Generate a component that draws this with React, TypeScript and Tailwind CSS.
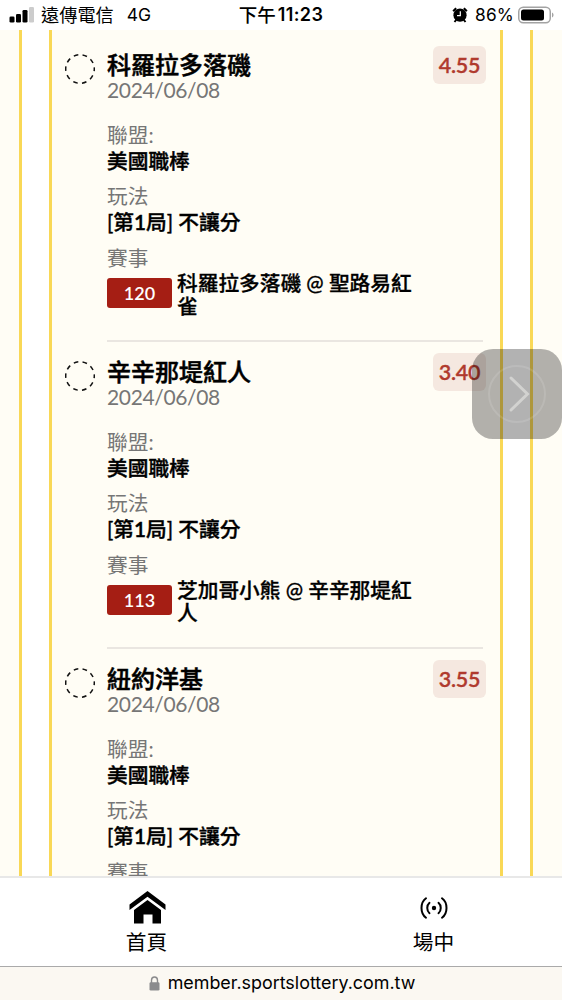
import React from 'react'

interface Bet {
  team: string;
  odds: string;
  code: string;
  match: string;
}

const bets: Bet[] = [
  { team: '科羅拉多落磯', odds: '4.55', code: '120', match: '科羅拉多落磯 @ 聖路易紅雀' },
  { team: '辛辛那堤紅人', odds: '3.40', code: '113', match: '芝加哥小熊 @ 辛辛那堤紅人' },
  { team: '紐約洋基', odds: '3.55', code: '', match: '' },
]

function StatusBar() {
  return (
    <header className="h-[30px] shrink-0 bg-white grid grid-cols-3 items-center text-[17px] leading-[30px] text-black font-['Inter','Noto_Sans_CJK_TC',sans-serif]">
      <div className="flex items-center pl-[9px]">
        <svg width="26" height="16" viewBox="0 0 26 16">
          <rect x="0.5" y="9.5" width="5" height="6" rx="1.3" />
          <rect x="7" y="7" width="5" height="8.5" rx="1.3" />
          <rect x="13.5" y="3" width="5" height="12.5" rx="1.3" />
          <rect x="20" y="0" width="5" height="15.5" rx="1.3" fill="#ccc" />
        </svg>
        <span className="ml-[6px] text-[18.2px] whitespace-nowrap">遠傳電信</span>
        <span className="ml-[13px] text-[17.5px]">4G</span>
      </div>
      <div className="flex justify-center font-semibold whitespace-nowrap">
        <span className="font-medium text-[18.5px]">下午</span>
        <span className="ml-[2px] text-[18px] tracking-[0.4px]">11:23</span>
      </div>
      <div className="flex items-center justify-end pr-[8px]">
        <svg width="16" height="16" viewBox="0 0 16 16">
          <circle cx="8" cy="8.2" r="6.6" />
          <path d="M1.2 4.2 4.2 1.2M14.8 4.2 11.8 1.2" stroke="#000" strokeWidth="2.2" />
          <path d="M2.500 15l2-2.500M13.500 15l-2-2.500" stroke="#000" strokeWidth="2" />
          <path d="M8.3 4.2v4.500H5" fill="none" stroke="#fff" strokeWidth="1.2" />
        </svg>
        <span className="ml-[7px] mr-[4px] text-[17.3px] tracking-[0.2px]">86%</span>
        <svg width="36" height="18" viewBox="0 0 36 18">
          <rect x="0.75" y="1.25" width="31.5" height="15.5" rx="4.5" fill="none" stroke="#a3a3a3" strokeWidth="1.5" />
          <rect x="3" y="3.5" width="23" height="11" rx="2.5" />
          <path d="M34 6.5c2 .8 2 4.2 0 5z" fill="#a3a3a3" />
        </svg>
      </div>
    </header>
  )
}

function BetItem({ bet }: { bet: Bet }) {
  return (
    <article className="h-[307px] shrink-0 flex pl-[13px]">
      <svg className="mt-[18px] shrink-0" width="30" height="32" viewBox="0 0 30 32">
        <circle cx="15" cy="16" r="14.3" fill="none" stroke="#111" strokeWidth="1.5" strokeDasharray="4.6 4.385" strokeDashoffset="2.3" />
      </svg>
      <div className="ml-[12px] w-[376px] shrink-0 h-full pt-[16px] border-b-2 border-[#eae6e1]">
        <div className="flex justify-between">
          <div>
            <h2 className="text-[24px] leading-[28px] font-medium text-black [-webkit-text-stroke:0.5px_#000]">{bet.team}</h2>
            <p className="text-[21px] leading-[22px] tracking-[-0.35px] text-[#767676]">2024/06/08</p>
          </div>
          <span className="-mr-[3px] -mt-[5px] w-[53px] h-[38px] rounded-[6px] bg-[#f5e8e0] text-[#b03a2e] text-[21.5px] leading-[39px] tracking-[-0.3px] font-semibold text-center [-webkit-text-stroke:0.3px_#b03a2e]">{bet.odds}</span>
        </div>
        <dl className="mt-[21px] text-[20.7px] leading-[26px]">
          <dt className="text-[#767676]">聯盟:</dt>
          <dd className="mb-[9px] font-medium text-black [-webkit-text-stroke:0.4px_#000]">美國職棒</dd>
          <dt className="text-[#767676]">玩法</dt>
          <dd className="mb-[10px] font-medium text-black [-webkit-text-stroke:0.4px_#000]">
            <span className="font-normal">[</span>第<span className="font-semibold">1</span>局<span className="font-normal">]</span> 不讓分
          </dd>
          <dt className="text-[#767676]">賽事</dt>
          {bet.match && (
            <dd className="flex font-medium text-black">
              <span className="mt-[7px] w-[65px] h-[30px] shrink-0 rounded-[3px] bg-[#a51e14] text-white text-[18px] leading-[31px] font-semibold text-center">{bet.code}</span>
              <span className="ml-[5px] mt-[1px] w-[240px] leading-[23px] [-webkit-text-stroke:0.3px_#000]">{bet.match}</span>
            </dd>
          )}
        </dl>
      </div>
    </article>
  )
}

export default function App() {
  return (
    <div className="relative w-[562px] h-[1000px] flex flex-col overflow-hidden bg-white font-['Lato','Noto_Sans_CJK_TC',sans-serif]">
      <StatusBar />
      <main className="h-[846px] shrink-0 overflow-hidden bg-[#fffdf5] pl-[19px] pr-[29px]">
        <div className="h-full border-x-[3px] border-[#f9d856] bg-white px-[27px]">
          <div className="h-full border-x-[3px] border-[#f9d856] bg-[#fffdf5] pt-[5px]">
            {bets.map((bet) => (
              <BetItem key={bet.team} bet={bet} />
            ))}
          </div>
        </div>
      </main>
      <nav className="h-[90px] shrink-0 border-t-2 border-[#e8e8e8] bg-white flex text-[20.7px] leading-[28px] text-black">
        <a className="w-[293px] shrink-0 flex flex-col items-center pt-[12px]">
          <svg width="38" height="34" viewBox="0 0 38 34">
            <path d="M19.5 1 37.5 14.5V20L19.5 6.8 1.5 20v-5.5z" />
            <path d="M19.5 10 33 20v13.500H24.5V24.5H15.5v9H6V20z" />
          </svg>
          <span className="mt-[4px]">首頁</span>
        </a>
        <a className="w-[281px] shrink-0 flex flex-col items-center pt-[12px]">
          <svg width="28" height="34" viewBox="0 0 28 34" fill="none" stroke="#000" strokeWidth="2" strokeLinecap="round">
            <circle cx="14" cy="18" r="2.2" fill="#000" stroke="none" />
            <path d="M9.5 12.8c-3 2.5-3 7.9 0 10.4M18.5 12.8c3 2.5 3 7.9 0 10.4M6 8.300c-6 4.300-6 15.100 0 19.400M22 8.300c6 4.300 6 15.100 0 19.400" />
          </svg>
          <span className="mt-[4px]">場中</span>
        </a>
      </nav>
      <footer className="h-[34px] shrink-0 border-t border-[#aaa] bg-[#fbf8f2] flex items-center justify-center pl-[2px] text-[17.9px] text-black font-['Inter',sans-serif]">
        <svg width="11" height="15" viewBox="0 0 11 15">
          <path d="M2.5 7V4.2a3 3.2 0 0 1 6 0V7" fill="none" stroke="#8b8b8d" strokeWidth="1.4" />
          <rect x="0.5" y="6.2" width="10" height="8.3" rx="1.3" fill="#8b8b8d" />
        </svg>
        <span className="ml-[8px]">member.sportslottery.com.tw</span>
      </footer>
      <button className="absolute left-[472px] top-[349px] w-[90px] h-[90px] rounded-[21px] bg-[#000]/30">
        <svg width="90" height="90" viewBox="0 0 90 90" fill="none">
          <circle cx="45" cy="45" r="28" stroke="#fff" strokeOpacity="0.12" strokeWidth="2" />
          <path d="M39 29 55.5 45 39 61" stroke="#d2d2d0" strokeWidth="3" strokeLinecap="round" />
        </svg>
      </button>
    </div>
  )
}
